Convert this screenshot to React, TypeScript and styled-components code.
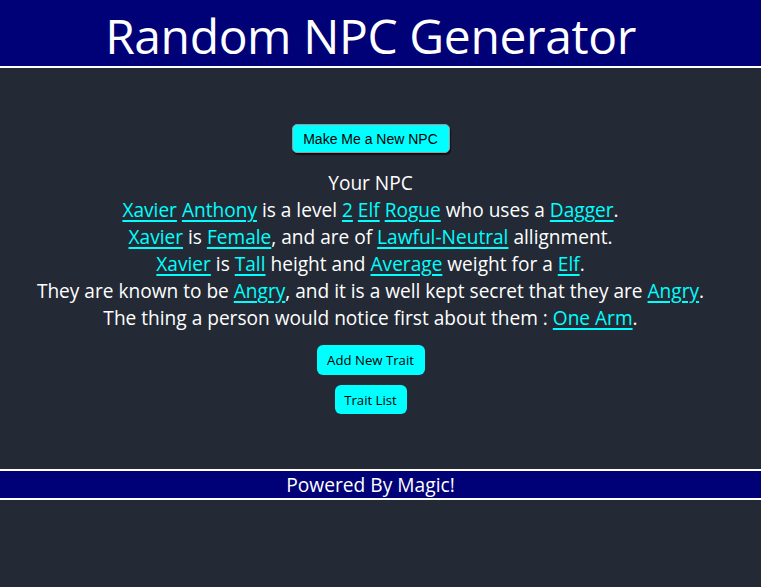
import React from "react";
import styled, { createGlobalStyle } from "styled-components";

const Global = createGlobalStyle`
  html, body { margin: 0; padding: 0; background: #232a35; }
  body { font-family: "Open Sans", "Noto Sans", sans-serif; color: #ffffff; }
`;

const Page = styled.div`
  display: flex;
  flex-direction: column;
  min-height: 587px;
  background: #232a35;
`;

const Header = styled.header`
  background: #000077;
  height: 66px;
  border-bottom: 2px solid #ffffff;
  display: flex;
  align-items: center;
  justify-content: center;
  padding-right: 20px;
`;

const Title = styled.h1`
  margin: 0;
  font-size: 48px;
  font-weight: 400;
  letter-spacing: -0.4px;
  color: #ffffff;
  line-height: 1;
  transform: translateY(3px);
`;

const Main = styled.main`
  display: flex;
  flex-direction: column;
  align-items: center;
  padding: 56px 20px 55px 0;
`;

const MakeButton = styled.button`
  font-family: "Liberation Sans", Arial, sans-serif;
  font-size: 14px;
  color: #000000;
  background: #00ffff;
  border: 1px solid #9a9a9a;
  border-radius: 5px;
  box-shadow: 1px 2px 1px rgba(0, 0, 0, 0.6);
  width: 158px;
  height: 29px;
  padding: 0;
  cursor: pointer;
`;

const Description = styled.div`
  margin-top: 17px;
  text-align: center;
  font-size: 19.1px;
  line-height: 27px;
`;

const Line = styled.div``;

const Value = styled.a`
  color: #00ffff;
  text-decoration: underline;
  text-underline-offset: 3px;
  text-decoration-thickness: 1.5px;
`;

const TraitButton = styled.button<{ $w: number }>`
  font-family: "Open Sans", sans-serif;
  font-size: 13.2px;
  color: #000000;
  background: #00ffff;
  border: none;
  border-radius: 6px;
  width: ${(p) => p.$w}px;
  height: ${(p) => (p.$w > 100 ? 30 : 29)}px;
  padding: 0;
  cursor: pointer;
`;

const ButtonStack = styled.div`
  margin-top: 13px;
  display: flex;
  flex-direction: column;
  align-items: center;
  gap: 10px;
`;

const Footer = styled.footer`
  background: #000077;
  border-top: 2px solid #ffffff;
  border-bottom: 2px solid #ffffff;
  height: 27px;
  display: flex;
  align-items: center;
  justify-content: center;
  padding-right: 20px;
  font-size: 19.2px;
`;

const V = ({ children }: { children: React.ReactNode }) => (
  <Value href="#">{children}</Value>
);

export default function App() {
  return (
    <>
      <Global />
      <Page>
        <Header>
          <Title>Random NPC Generator</Title>
        </Header>
        <Main>
          <MakeButton>Make Me a New NPC</MakeButton>
          <Description>
            <Line>Your NPC</Line>
            <Line>
              <V>Xavier</V> <V>Anthony</V> is a level <V>2</V> <V>Elf</V>{" "}
              <V>Rogue</V> who uses a <V>Dagger</V>.
            </Line>
            <Line>
              <V>Xavier</V> is <V>Female</V>, and are of <V>Lawful-Neutral</V>{" "}
              allignment.
            </Line>
            <Line>
              <V>Xavier</V> is <V>Tall</V> height and <V>Average</V> weight for a{" "}
              <V>Elf</V>.
            </Line>
            <Line>
              They are known to be <V>Angry</V>, and it is a well kept secret that
              they are <V>Angry</V>.
            </Line>
            <Line>
              The thing a person would notice first about them : <V>One Arm</V>.
            </Line>
          </Description>
          <ButtonStack>
            <TraitButton $w={108}>Add New Trait</TraitButton>
            <TraitButton $w={72}>Trait List</TraitButton>
          </ButtonStack>
        </Main>
        <Footer>Powered By Magic!</Footer>
      </Page>
    </>
  );
}
